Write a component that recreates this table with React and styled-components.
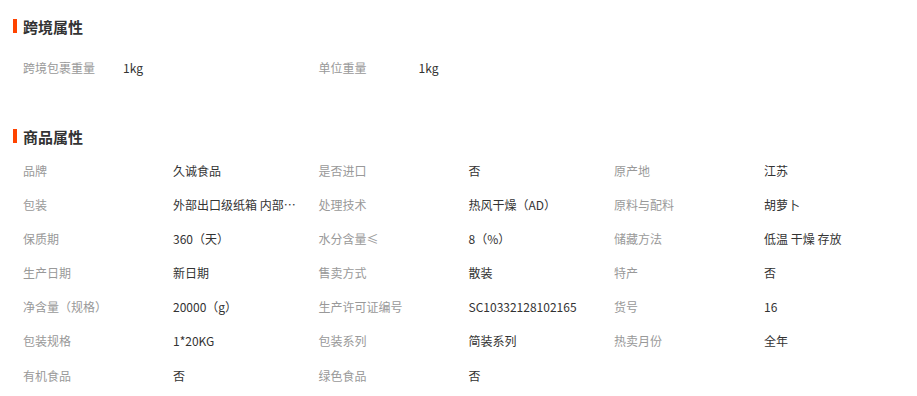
import React from 'react';
import styled, { createGlobalStyle } from 'styled-components';

const GlobalStyle = createGlobalStyle`
  body {
    margin: 0;
    background: #fff;
    font-family: "Noto Sans CJK SC", "Liberation Sans", sans-serif;
    color: #333;
  }
`;

const Page = styled.div`
  width: 917px;
  padding: 16px 0 0 13px;
  box-sizing: border-box;
`;

const Section = styled.section`
  margin-top: ${(p) => p.$top || 0}px;
`;

const Title = styled.h3`
  display: flex;
  align-items: center;
  margin: 0;
  height: 20px;
  font-size: 15px;
  font-weight: 700;
  color: #333;

  &:before {
    content: '';
    width: 4px;
    height: 14px;
    margin-right: 6px;
    background-color: #ff4400;
  }
`;

const Grid = styled.ul`
  display: grid;
  grid-template-columns: repeat(3, 295.5px);
  grid-auto-rows: ${(p) => p.$row}px;
  margin: ${(p) => p.$gap}px 0 0;
  padding: 0 0 0 10px;
  list-style: none;
`;

const Item = styled.li`
  display: flex;
  align-items: center;
  font-size: 12px;
`;

const Label = styled.span`
  width: ${(p) => p.$w}px;
  flex-shrink: 0;
  color: #999;
`;

const Value = styled.span`
  color: #333;
  white-space: nowrap;
`;

const cross = [
  ['跨境包裹重量', '1kg'],
  ['单位重量', '1kg'],
];

// 包装 value is shown clipped in the source page
const props = [
  ['品牌', '久诚食品'],
  ['是否进口', '否'],
  ['原产地', '江苏'],
  ['包装', '外部出口级纸箱 内部…'],
  ['处理技术', '热风干燥（AD）'],
  ['原料与配料', '胡萝卜'],
  ['保质期', '360（天）'],
  ['水分含量≤', '8（%）'],
  ['储藏方法', '低温 干燥 存放'],
  ['生产日期', '新日期'],
  ['售卖方式', '散装'],
  ['特产', '否'],
  ['净含量（规格）', '20000（g）'],
  ['生产许可证编号', 'SC10332128102165'],
  ['货号', '16'],
  ['包装规格', '1*20KG'],
  ['包装系列', '简装系列'],
  ['热卖月份', '全年'],
  ['有机食品', '否'],
  ['绿色食品', '否'],
];

const App = () => {
  return (
    <Page>
      <GlobalStyle />
      <Section>
        <Title>跨境属性</Title>
        <Grid $row={34} $gap={14}>
          {cross.map(([k, v]) => (
            <Item key={k}>
              <Label $w={100}>{k}</Label>
              <Value>{v}</Value>
            </Item>
          ))}
        </Grid>
      </Section>
      <Section $top={42}>
        <Title>商品属性</Title>
        <Grid $row={34.17} $gap={7}>
          {props.map(([k, v]) => (
            <Item key={k}>
              <Label $w={150}>{k}</Label>
              <Value>{v}</Value>
            </Item>
          ))}
        </Grid>
      </Section>
    </Page>
  );
};

export default App;
